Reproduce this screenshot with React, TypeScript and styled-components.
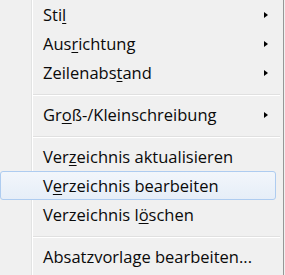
import React from 'react'
import styled, { createGlobalStyle } from 'styled-components'

const GlobalStyle = createGlobalStyle`
  html, body {
    margin: 0;
    padding: 0;
    background: #f0f0f0;
  }
`;

const Menu = styled.div`
  width: 284px;
  height: 275px;
  box-sizing: border-box;
  border-right: 1px solid #979797;
  background: #f0f0f0;
  display: flex;
  flex-direction: column;
  position: relative;
  overflow: hidden;

  &::before {
    content: '';
    position: absolute;
    top: 0;
    bottom: 0;
    left: 31px;
    width: 1px;
    background: #e2e3e3;
    border-right: 1px solid #ffffff;
  }
`;

const Item = styled.div<{ $active: boolean }>`
  height: 29px;
  flex: none;
  display: flex;
  align-items: center;
  box-sizing: border-box;
  margin-right: 7px;
  border-radius: 3px;
  position: relative;
  z-index: 1;
  border: 1px solid ${({ $active }) => ($active ? '#aeccf0' : 'transparent')};
  background: ${({ $active }) =>
    $active ? 'linear-gradient(#f2f6fb, #e6eef8)' : 'transparent'};
`;

const Gutter = styled.div`
  width: 42px;
  flex: none;
`;

const Label = styled.span`
  flex: 1;
  font-family: 'Open Sans', 'Noto Sans', sans-serif;
  font-size: 16.5px;
  color: #0a0a0a;
  white-space: nowrap;
`;

const Key = styled.span`
  text-decoration: underline;
  text-underline-offset: 2px;
`;

const Arrow = styled.span`
  width: 0;
  height: 0;
  margin-right: 7px;
  border-top: 3.5px solid transparent;
  border-bottom: 3.5px solid transparent;
  border-left: 4px solid #000;
`;

const Separator = styled.div`
  height: 13px;
  flex: none;
  margin-left: 33px;
  margin-right: 3px;
  position: relative;

  &::after {
    content: '';
    position: absolute;
    left: 0;
    right: 0;
    top: 7px;
    height: 1px;
    background: #e0e0e0;
    border-bottom: 1px solid #ffffff;
  }
`;

type Entry =
  | { kind: 'item'; label: React.ReactNode; submenu?: boolean; active?: boolean }
  | { kind: 'sep' };

const u = (s: string) => <Key>{s}</Key>;

const App: React.FC = () => {
  const entries: Entry[] = [
    { kind: 'item', label: <>Sti{u('l')}</>, submenu: true },
    { kind: 'item', label: <>Aus{u('r')}ichtung</>, submenu: true },
    { kind: 'item', label: <>Zeilenabs{u('t')}and</>, submenu: true },
    { kind: 'sep' },
    { kind: 'item', label: <>Gr{u('o')}ß-/Kleinschreibung</>, submenu: true },
    { kind: 'sep' },
    { kind: 'item', label: <>Ver{u('z')}eichnis aktualisieren</> },
    { kind: 'item', label: <>V{u('e')}rzeichnis bearbeiten</>, active: true },
    { kind: 'item', label: <>Verzeichnis l{u('ö')}schen</> },
    { kind: 'sep' },
    { kind: 'item', label: <>Absatzvorlage bearbeiten...</> },
  ];

  return (
    <>
      <GlobalStyle />
      <Menu>
        {entries.map((e, i) =>
          e.kind === 'sep' ? (
            <Separator key={i} />
          ) : (
            <Item key={i} $active={!!e.active}>
              <Gutter />
              <Label>{e.label}</Label>
              {e.submenu && <Arrow />}
            </Item>
          )
        )}
      </Menu>
    </>
  )
}

export default App
